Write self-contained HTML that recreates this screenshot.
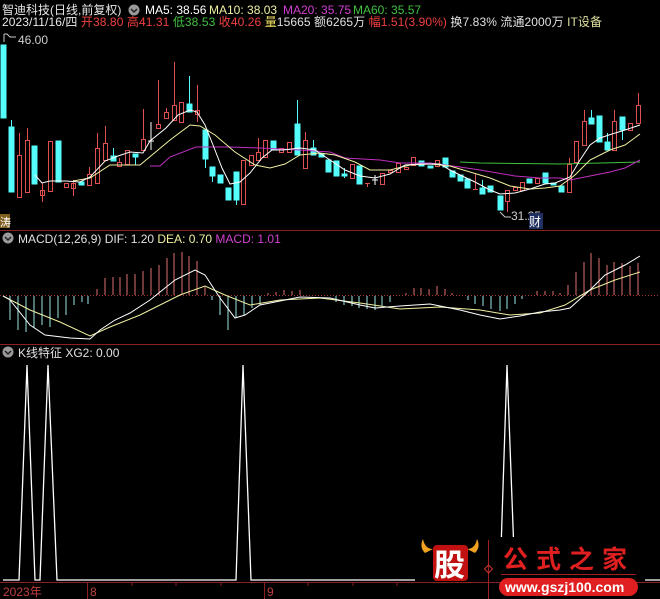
<!DOCTYPE html>
<html><head><meta charset="utf-8"><style>
html,body{margin:0;padding:0;background:#000;width:660px;height:599px;overflow:hidden}
svg{display:block}
text{font-family:"Liberation Sans","Noto Sans CJK SC",sans-serif;font-size:12px}
</style></head><body>
<svg width="660" height="599" viewBox="0 0 660 599" xmlns="http://www.w3.org/2000/svg">
<rect width="660" height="599" fill="#000"/>
<!-- header -->
<text x="2" y="14" fill="#e8e8e8">智迪科技(日线,前复权)</text>
<circle cx="134" cy="10" r="5.5" fill="#9a9a9a"/><path d="M131 9 l3 3 l3 -3" stroke="#222" stroke-width="1.5" fill="none"/>
<text x="145" y="14" fill="#ffffff">MA5: 38.56</text>
<text x="209" y="14" fill="#f0f0a0">MA10: 38.03</text>
<text x="283" y="14" fill="#d040d0">MA20: 35.75</text>
<text x="353" y="14" fill="#40c040">MA60: 35.57</text>
<text x="2" y="26" fill="#e8e8e8" textLength="600" lengthAdjust="spacing">2023/11/16/四 <tspan fill="#f04040">开38.80 高41.31 </tspan><tspan fill="#40c040">低38.53 </tspan><tspan fill="#f04040">收40.26 </tspan><tspan fill="#f0e060">量</tspan><tspan fill="#e0e0e0">15665 额6265万 </tspan><tspan fill="#f04040">幅1.51(3.90%) </tspan><tspan fill="#e0e0e0">换7.83% 流通2000万 </tspan><tspan fill="#e0e0a0">IT设备</tspan></text>
<text x="18" y="44" fill="#d0d0d0">46.00</text>
<path d="M4 34 v8 M4 34 h3 l3 3 l6 0" stroke="#ccc" fill="none"/>
<!-- separators -->
<g stroke="#8a2020" stroke-width="1"><line x1="0" y1="230.5" x2="660" y2="230.5"/><line x1="0" y1="344.5" x2="660" y2="344.5"/><line x1="0" y1="582.5" x2="660" y2="582.5"/></g>
<rect x="0" y="214" width="10" height="14" fill="#806020"/><text x="0" y="226" fill="#fff" style="font-size:11px">涛</text>
<!-- candles -->
<g stroke-width="1">
<g fill="#54fcfc" stroke="#54fcfc">
<rect x="1" y="45" width="5" height="73"/>
<line x1="11.5" y1="120" x2="11.5" y2="127"/><rect x="9" y="127" width="5" height="65"/>
<rect x="32" y="146" width="5" height="38"/>
<rect x="56" y="141" width="5" height="41"/>
<rect x="79" y="182" width="5" height="3"/>
<rect x="111" y="156" width="5" height="5"/><line x1="113.5" y1="148" x2="113.5" y2="156"/>
<rect x="133" y="154" width="5" height="3"/><line x1="135.5" y1="157" x2="135.5" y2="165"/>
<line x1="189.5" y1="76" x2="189.5" y2="104"/><rect x="187" y="104" width="5" height="8"/>
<rect x="203" y="130" width="5" height="29"/><line x1="205.5" y1="159" x2="205.5" y2="168"/>
<rect x="210" y="167" width="5" height="9"/><line x1="212.5" y1="176" x2="212.5" y2="182"/>
<rect x="218" y="175" width="5" height="8"/>
<rect x="226" y="188" width="5" height="12"/>
<rect x="234" y="172" width="5" height="28"/><line x1="236.5" y1="200" x2="236.5" y2="205"/>
<rect x="271" y="141" width="5" height="9"/>
<line x1="297.5" y1="100" x2="297.5" y2="124"/><rect x="295" y="124" width="5" height="31"/>
<line x1="313.5" y1="140" x2="313.5" y2="148"/><rect x="311" y="148" width="5" height="7"/>
<rect x="319" y="154" width="5" height="3"/>
<rect x="326" y="160" width="5" height="12"/>
<rect x="334" y="161" width="5" height="15"/>
<rect x="342" y="174" width="5" height="2"/><line x1="344.5" y1="168" x2="344.5" y2="178"/>
<rect x="357" y="166" width="5" height="18"/>
<rect x="419" y="161" width="5" height="5"/>
<rect x="428" y="166" width="5" height="2"/>
<rect x="443" y="158" width="5" height="9"/>
<rect x="450" y="171" width="5" height="6"/>
<rect x="458" y="175" width="5" height="6"/>
<rect x="465" y="179" width="5" height="9"/>
<line x1="482.5" y1="180" x2="482.5" y2="188"/><rect x="480" y="188" width="5" height="6"/>
<rect x="488" y="186" width="5" height="6"/>
<rect x="498" y="196" width="5" height="14"/>
<rect x="527" y="179" width="5" height="4"/>
<rect x="543" y="173" width="5" height="10"/>
<rect x="551" y="183" width="5" height="2"/>
<rect x="559" y="186" width="5" height="6"/>
<line x1="591.5" y1="110" x2="591.5" y2="118"/><rect x="589" y="118" width="5" height="6"/>
<rect x="597" y="116" width="5" height="26"/>
<line x1="607.5" y1="133" x2="607.5" y2="142"/><rect x="605" y="142" width="5" height="8"/>
<rect x="620" y="117" width="5" height="13"/><line x1="622.5" y1="130" x2="622.5" y2="140"/>
</g>
<g fill="none" stroke="#e05050">
<rect x="17.5" y="155.5" width="4" height="42"/><line x1="19.5" y1="133" x2="19.5" y2="155"/>
<rect x="25.5" y="140.5" width="4" height="52"/><line x1="27.5" y1="128" x2="27.5" y2="140"/>
<rect x="40.5" y="190.5" width="4" height="5"/><line x1="42.5" y1="183" x2="42.5" y2="202"/>
<rect x="48.5" y="141.5" width="4" height="50"/>
<rect x="64.5" y="183.5" width="4" height="4"/>
<rect x="71.5" y="183.5" width="4" height="5"/><line x1="73.5" y1="180" x2="73.5" y2="196"/>
<rect x="87.5" y="174.5" width="4" height="11"/><line x1="89.5" y1="167" x2="89.5" y2="174"/>
<rect x="95.5" y="148.5" width="4" height="35"/><line x1="97.5" y1="133" x2="97.5" y2="148"/>
<rect x="103.5" y="143.5" width="4" height="17"/><line x1="105.5" y1="126" x2="105.5" y2="143"/>
<rect x="117.5" y="162.5" width="4" height="4"/><line x1="119.5" y1="158" x2="119.5" y2="162"/>
<rect x="125.5" y="150.5" width="4" height="14"/>
<rect x="141.5" y="139.5" width="4" height="11"/><line x1="143.5" y1="109" x2="143.5" y2="139"/>
<rect x="156.5" y="124.5" width="4" height="4"/><line x1="158.5" y1="80" x2="158.5" y2="124"/>
<rect x="164.5" y="112.5" width="4" height="6"/><line x1="166.5" y1="108" x2="166.5" y2="112"/>
<rect x="172.5" y="105.5" width="4" height="15"/><line x1="174.5" y1="62" x2="174.5" y2="105"/>
<rect x="179.5" y="102.5" width="4" height="20"/>
<rect x="195.5" y="110.5" width="4" height="4"/><line x1="197.5" y1="85" x2="197.5" y2="122"/>
<rect x="241.5" y="160.5" width="4" height="44"/>
<rect x="249.5" y="155.5" width="4" height="10"/>
<rect x="256.5" y="152.5" width="4" height="8"/><line x1="258.5" y1="138" x2="258.5" y2="152"/>
<rect x="263.5" y="140.5" width="4" height="17"/>
<rect x="279.5" y="148.5" width="4" height="4"/>
<rect x="287.5" y="142.5" width="4" height="10"/>
<rect x="303.5" y="140.5" width="4" height="28"/><line x1="305.5" y1="132" x2="305.5" y2="140"/>
<rect x="350.5" y="164.5" width="4" height="14"/>
<line x1="365" y1="183.5" x2="370" y2="183.5"/><line x1="367.5" y1="183" x2="367.5" y2="187"/>
<rect x="380.5" y="173.5" width="4" height="11"/>
<rect x="388.5" y="170.5" width="4" height="2"/>
<rect x="396.5" y="163.5" width="4" height="9"/>
<rect x="404.5" y="167.5" width="4" height="2"/>
<rect x="411.5" y="157.5" width="4" height="8"/>
<rect x="435.5" y="160.5" width="4" height="6"/>
<line x1="473" y1="189.5" x2="478" y2="189.5"/><line x1="475.5" y1="174" x2="475.5" y2="190"/>
<rect x="505.5" y="190.5" width="4" height="11"/><line x1="507.5" y1="201" x2="507.5" y2="212"/>
<rect x="513.5" y="187.5" width="4" height="3"/>
<rect x="520.5" y="182.5" width="4" height="8"/>
<rect x="535.5" y="178.5" width="4" height="5"/>
<rect x="567.5" y="164.5" width="4" height="28"/><line x1="569.5" y1="158" x2="569.5" y2="164"/>
<rect x="574.5" y="141.5" width="4" height="21"/>
<rect x="582.5" y="121.5" width="4" height="24"/><line x1="584.5" y1="110" x2="584.5" y2="121"/>
<rect x="612.5" y="121.5" width="4" height="29"/><line x1="614.5" y1="110" x2="614.5" y2="121"/>
<rect x="628.5" y="123.5" width="4" height="7"/>
<rect x="636.5" y="105.5" width="4" height="18"/><line x1="638.5" y1="93" x2="638.5" y2="105"/>
</g>
<g stroke="#fff"><line x1="148" y1="141" x2="154" y2="141"/><line x1="151" y1="122" x2="151" y2="150"/><line x1="372" y1="180" x2="378" y2="180"/><line x1="375" y1="175" x2="375" y2="185"/></g>
</g>
<!-- MAs -->
<polyline fill="none" stroke="#40c040" points="460,162 480,163 560,164 640,162"/>
<polyline fill="none" stroke="#c030c0" points="150,166 160,166 170,157 196,147 230,147 260,148 300,150 330,152 345,158 380,160 400,163 430,163 460,167 480,170 515,176 540,178 560,178 570,180 590,176 610,172 625,168 640,160"/>
<polyline fill="none" stroke="#f0f0a0" points="73,181 90,178 110,165 140,165 170,140 190,125 200,126 215,135 235,152 255,165 270,168 285,164 300,155 320,153 335,155 355,162 370,170 390,170 410,165 430,164 450,166 470,172 490,178 510,186 530,189 545,188 560,186 575,175 590,160 610,150 625,145 640,134"/>
<polyline fill="none" stroke="#ffffff" points="35,175 42,183 50,181 66,181 80,182 90,177 105,161 118,156 130,152 143,153 150,141 166,128 178,115 190,110 197,112 205,125 213,145 222,168 230,184 240,182 250,173 262,158 272,150 283,150 300,148 315,150 330,160 345,170 360,176 375,178 390,174 405,165 420,164 440,164 450,170 460,175 475,182 490,190 500,194 515,193 530,189 545,184 555,183 570,177 580,160 590,145 600,138 612,134 625,130 640,125"/>
<text x="511" y="220" fill="#d0d0d0">31.25</text><path d="M500 212 l5 5 h6" stroke="#ccc" fill="none"/>
<rect x="529" y="213" width="14" height="16" fill="#203060"/><text x="529" y="226" fill="#fff">财</text>
<!-- MACD -->
<circle cx="8" cy="238" r="5.5" fill="#9a9a9a"/><path d="M5 237 l3 3 l3 -3" stroke="#222" stroke-width="1.5" fill="none"/>
<text x="18" y="243" fill="#e0e0e0">MACD(12,26,9) <tspan>DIF: 1.20 </tspan><tspan fill="#f0f0a0">DEA: 0.70 </tspan><tspan fill="#d040d0">MACD: 1.01</tspan></text>
<line x1="0" y1="295.5" x2="660" y2="295.5" stroke="#a03030" stroke-dasharray="1 2"/>
<g stroke="#9ee8e8">
<path d="M10 296V320M18 296V330M26 296V332M34 296V328M42 296V325M50 296V327M58 296V318M66 296V315M74 296V305M82 296V302M88 296V304"/>
<path d="M212 296V300M220 296V315M228 296V330M236 296V318M244 296V315M252 296V308M260 296V305"/>
<path d="M336 296V302M344 296V305M352 296V306M359 296V308M367 296V309M375 296V310M382 296V306M390 296V302"/>
<path d="M468 296V300M475 296V304M483 296V306M491 296V309M500 296V311M507 296V309M515 296V304M522 296V299"/>
</g>
<g stroke="#e07070">
<path d="M97 295V289M105 295V278M113 295V277M120 295V277M127 295V274M135 295V274M143 295V271M151 295V268M159 295V265M167 295V258M174 295V253M182 295V252M189 295V256M197 295V261M205 295V287"/>
<path d="M268 295V293M276 295V292M284 295V290M292 295V291M300 295V290"/>
<path d="M406 295V293M414 295V288M421 295V288M429 295V289M437 295V286M445 295V289M452 295V293"/>
<path d="M537 295V291M545 295V291M553 295V291M560 295V293M568 295V285M576 295V272M584 295V262M591 295V253M599 295V258M607 295V265M614 295V262M622 295V263M630 295V266M638 295V263"/>
</g>
<polyline fill="none" stroke="#f0f0a0" points="3,296 30,310 60,322 90,336 110,327 140,315 180,295 205,286 225,295 250,305 280,300 320,298 360,303 400,309 440,307 480,310 510,315 540,313 565,305 590,290 615,280 640,272"/>
<polyline fill="none" stroke="#ffffff" points="3,296 10,300 30,325 45,335 70,338 90,339 100,330 115,320 130,313 150,300 175,280 195,270 205,275 220,298 235,318 245,315 260,305 300,297 330,298 360,305 375,308 400,306 430,304 460,310 480,315 500,319 520,316 540,312 560,310 570,308 590,290 605,275 625,265 640,256"/>
<!-- XG2 -->
<circle cx="8" cy="352" r="5.5" fill="#9a9a9a"/><path d="M5 351 l3 3 l3 -3" stroke="#222" stroke-width="1.5" fill="none"/>
<text x="18" y="357" fill="#e0e0e0">K线特征  XG2: 0.00</text>
<polyline fill="none" stroke="#fff" stroke-width="1.3" points="3,580 19,580 27,365 35,580 40,580 48,365 57,580 236,580 243,365 251,580 500,580 507,365 515,580 660,580"/>
<!-- axis -->
<text x="3" y="596" fill="#c04040">2023年</text>
<g stroke="#8a2020"><line x1="87.5" y1="583" x2="87.5" y2="599"/><line x1="264.5" y1="583" x2="264.5" y2="599"/><path d="M132 583v3M176 583v3M221 583v3M308 583v3M353 583v3M397 583v3"/></g>
<text x="90" y="596" fill="#c04040">8</text><text x="267" y="596" fill="#c04040">9</text>
<!-- logo -->
<rect x="415" y="537" width="230" height="45" fill="#000"/>
<path d="M425 553 q-6 -6 -2 -14 q2 10 10 10z M475 553 q6 -6 2 -14 q-2 10 -10 10z" fill="#f0a020"/>
<rect x="433" y="545" width="35" height="36" rx="4" fill="#c01010"/>
<text x="434" y="576" fill="#fff" style="font-size:31px;font-weight:bold;font-family:'Noto Sans CJK SC',sans-serif">股</text>
<line x1="488.5" y1="540" x2="488.5" y2="599" stroke="#a02020"/>
<path d="M488.5 565 l4 4 l-4 4 l-4 -4z" fill="none" stroke="#d03030"/>
<text x="503" y="568" fill="#e02020" style="font-size:25px;font-weight:bold;letter-spacing:8px;font-family:'Noto Sans CJK SC',sans-serif">公式之家</text>
<line x1="501" y1="574.5" x2="636" y2="574.5" stroke="#a02020"/>
<rect x="499" y="578" width="139" height="18" rx="9" fill="#e02020"/>
<text x="505" y="592" fill="#fff" style="font-size:14px;font-weight:bold">www.gszj100.com</text>
</svg>
</body></html>
